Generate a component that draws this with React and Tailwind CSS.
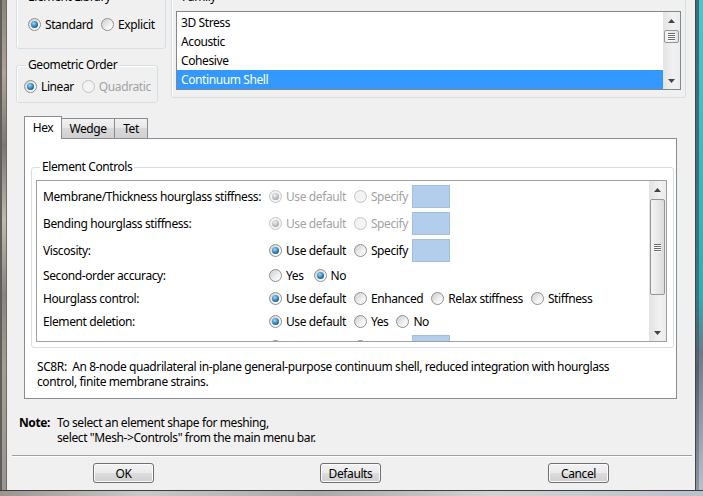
import React from "react";

const dim = "text-[#a3a3a3]";

function Radio({ checked = false, disabled = false, label, className = "" }) {
  return (
    <span className={`flex items-center ${className}`}>
      <span
        className={`flex items-center justify-center w-[13px] h-[13px] rounded-full border ${
          disabled
            ? "border-[#c4c4c4] bg-[#f3f3f3]"
            : "border-[#8e8f8f] bg-[linear-gradient(135deg,#cdcdcd,#f4f4f4_65%,#ffffff)]"
        }`}
      >
        {checked && (
          <span
            className={`w-[7px] h-[7px] rounded-full ${
              disabled
                ? "bg-[radial-gradient(circle_at_40%_35%,#f2f2f2,#a6a6a6_75%)]"
                : "bg-[radial-gradient(circle_at_40%_35%,#9bdcfb,#2b78b1_55%,#163f66)]"
            }`}
          />
        )}
      </span>
      {label && <span className={`ml-[4px] whitespace-nowrap ${disabled ? dim : "text-black"}`}>{label}</span>}
    </span>
  );
}

function Box() {
  return <span className="-ml-[4px] w-[38px] h-[23px] bg-[#b3cdec] border border-[#a4bedd]" />;
}

function Arrow({ down }) {
  return (
    <svg width="7" height="4" viewBox="0 0 7 4">
      <path d={down ? "M0 0H7L3.5 4z" : "M3.5 0L7 4H0z"} fill="#444" />
    </svg>
  );
}

function Grip() {
  return (
    <div className="flex flex-col gap-[1px]">
      {[0, 1, 2, 3].map((i) => (
        <div key={i} className="w-[7px] h-[1px] bg-[#6b6b6b] shadow-[0_1px_0_#fff]" />
      ))}
    </div>
  );
}

function ScrollBar({ thumb }) {
  return (
    <div className="flex flex-col w-[17px] shrink-0 bg-[linear-gradient(to_right,#e3e3e3,#f1f1f1_60%,#ececec)]">
      <div className="h-[17px] flex items-center justify-center">
        <Arrow />
      </div>
      <div className="flex-1 flex flex-col items-center">{thumb}</div>
      <div className="h-[17px] flex items-center justify-center">
        <Arrow down />
      </div>
    </div>
  );
}

function Row({ label, tall, children }) {
  return (
    <div className={`flex items-center ${tall ? "h-[27px]" : "h-[23px]"}`}>
      <span className="w-[226px] shrink-0 whitespace-nowrap">{label}</span>
      <div className="flex items-center gap-[8px]">{children}</div>
    </div>
  );
}

function Button({ children, className = "" }) {
  return (
    <div
      className={`w-[61px] h-[20px] rounded-[3px] border border-[#707070] bg-[linear-gradient(#f2f2f2,#ebebeb_50%,#dddddd_50%,#cfcfcf)] shadow-[inset_0_0_0_1px_#fbfbfb] flex items-center justify-center ${className}`}
    >
      {children}
    </div>
  );
}

export default function App() {
  return (
    <div className="w-[703px] h-[496px] overflow-hidden flex flex-col bg-[#f0f0f0] font-['Noto_Sans','Liberation_Sans',sans-serif] text-[12px] leading-[15px] tracking-[-0.4px] text-black">
      <div className="flex h-[490px]">
        {/* left window frame */}
        <div className="flex shrink-0">
          <div className="w-[2px] bg-[#5e5e5e]" />
          <div className="w-[4px] bg-[linear-gradient(to_bottom,#8c8479,#b0a496_15%,#7d7872_30%,#c2b8ac_45%,#8a847c_60%,#a79d92_75%,#9d968e)]" />
          <div className="w-[1px] bg-[#6a6a6a]" />
        </div>

        {/* dialog body */}
        <div className="w-[688px] flex flex-col overflow-hidden">
          <div className="flex items-start mt-[-11px]">
            <div className="ml-[9px] flex flex-col w-[150px]">
              <fieldset className="h-[60px] border border-[#d5dfe5] rounded-[3px] px-[4px] shadow-[inset_1px_1px_0_#fff]">
                <legend className="ml-[5px] px-[2px] leading-[16px]">Element Library</legend>
                <div className="flex items-center h-[19px] mt-[10px] ml-[7px]">
                  <Radio checked label="Standard" />
                  <Radio label="Explicit" className="ml-[8px]" />
                </div>
              </fieldset>
              <fieldset className="mt-[8px] w-[142px] h-[46px] border border-[#d5dfe5] rounded-[3px] px-[4px] shadow-[inset_1px_1px_0_#fff]">
                <legend className="ml-[5px] px-[2px] leading-[16px]">Geometric Order</legend>
                <div className="flex items-center h-[19px] mt-[4px] ml-[3px]">
                  <Radio checked label="Linear" />
                  <Radio disabled label="Quadratic" className="ml-[8px]" />
                </div>
              </fieldset>
            </div>

            <fieldset className="ml-[5px] w-[515px] h-[109px] border border-[#d5dfe5] rounded-[3px] px-[4px] shadow-[inset_1px_1px_0_#fff]">
              <legend className="ml-[4px] px-[2px] leading-[16px]">Family</legend>
              <div className="mt-[6px] h-[79px] border border-[#828790] bg-white flex">
                <div className="flex-1 flex flex-col pt-[1px]">
                  {["3D Stress", "Acoustic", "Cohesive"].map((t) => (
                    <div key={t} className="h-[19px] flex items-center pl-[4px]">
                      {t}
                    </div>
                  ))}
                  <div className="h-[19px] flex items-center pl-[4px] bg-[#3399ff] text-white">Continuum Shell</div>
                </div>
                <ScrollBar
                  thumb={
                    <div className="mt-[1px] w-[15px] h-[13px] rounded-[2px] border border-[#959595] bg-[linear-gradient(to_right,#f4f4f4,#e4e4e4)] flex items-center justify-center">
                      <Grip />
                    </div>
                  }
                />
              </div>
            </fieldset>
          </div>

          {/* tabs */}
          <div className="mt-[13px] ml-[17px] flex items-end h-[22px]">
            <div className="relative z-10 mb-[-1px] h-[23px] w-[38px] border border-b-0 border-[#898c95] bg-white flex items-center justify-center pb-[1px]">
              Hex
            </div>
            <div className="h-[20px] w-[53px] border border-l-0 border-b-0 border-[#898c95] bg-[linear-gradient(#f2f2f2,#e6e6e6_50%,#d9d9d9_50%,#d0d0d0)] flex items-center justify-center">
              Wedge
            </div>
            <div className="h-[20px] w-[33px] border border-l-0 border-b-0 border-[#898c95] bg-[linear-gradient(#f2f2f2,#e6e6e6_50%,#d9d9d9_50%,#d0d0d0)] flex items-center justify-center">
              Tet
            </div>
          </div>

          <div className="ml-[17px] w-[653px] h-[261px] border border-[#898c95] bg-white flex flex-col">
            <fieldset className="mt-[20px] ml-[6px] w-[643px] h-[189px] border border-[#d5dfe5] rounded-[3px] px-[4px]">
              <legend className="ml-[4px] px-[2px] leading-[16px]">Element Controls</legend>
              <div className="mt-[5px] w-[631px] h-[162px] border border-[#a0a0a0] flex">
                <div className="flex-1 overflow-hidden pt-[2px] pl-[6px]">
                  <Row tall label="Membrane/Thickness hourglass stiffness:">
                    <Radio checked disabled label="Use default" />
                    <Radio disabled label="Specify" />
                    <Box />
                  </Row>
                  <Row tall label="Bending hourglass stiffness:">
                    <Radio checked disabled label="Use default" />
                    <Radio disabled label="Specify" />
                    <Box />
                  </Row>
                  <Row tall label="Viscosity:">
                    <Radio checked label="Use default" />
                    <Radio label="Specify" />
                    <Box />
                  </Row>
                  <Row label="Second-order accuracy:">
                    <Radio label="Yes" />
                    <Radio checked label="No" className="ml-[2px]" />
                  </Row>
                  <Row label="Hourglass control:">
                    <Radio checked label="Use default" />
                    <Radio label="Enhanced" />
                    <Radio label="Relax stiffness" />
                    <Radio label="Stiffness" />
                  </Row>
                  <Row label="Element deletion:">
                    <Radio checked label="Use default" />
                    <Radio label="Yes" />
                    <Radio label="No" />
                  </Row>
                  <Row tall label="Max degradation:">
                    <Radio checked label="Use default" />
                    <Radio label="Specify" />
                    <Box />
                  </Row>
                </div>
                <ScrollBar
                  thumb={
                    <div className="mt-[1px] w-[15px] h-[96px] rounded-[2px] border border-[#959595] bg-[linear-gradient(to_right,#f4f4f4,#e6e6e6_60%,#dcdcdc)] flex items-center justify-center">
                      <Grip />
                    </div>
                  }
                />
              </div>
            </fieldset>
            <div className="mt-[11px] ml-[12px] whitespace-pre">
              <div>SC8R:  An 8-node quadrilateral in-plane general-purpose continuum shell, reduced integration with hourglass</div>
              <div>control, finite membrane strains.</div>
            </div>
          </div>

          {/* note */}
          <div className="mt-[16px] ml-[12px] flex">
            <span className="w-[38px] shrink-0 font-bold">Note:</span>
            <div>
              <div>To select an element shape for meshing,</div>
              <div>select "Mesh-&gt;Controls" from the main menu bar.</div>
            </div>
          </div>

          <div className="mt-[10px] ml-[5px] w-[680px] h-[2px] border-t border-b border-t-[#a0a0a0] border-b-white" />

          <div className="mt-[6px] flex">
            <Button className="ml-[86px]">OK</Button>
            <Button className="ml-[166px]">Defaults</Button>
            <Button className="ml-[167px]">Cancel</Button>
          </div>
        </div>

        {/* right window frame */}
        <div className="flex shrink-0">
          <div className="w-[1px] bg-[#454545]" />
          <div className="w-[3px] bg-[linear-gradient(to_bottom,#3f6b78,#3c7480_60%,#56606c_75%,#8d98a4)]" />
          <div className="w-[4px] bg-[linear-gradient(to_bottom,#48c8cc,#2bb0b4_60%,#6c7a88_72%,#b7c0ca)]" />
        </div>
      </div>

      {/* bottom window frame */}
      <div className="h-[6px] border-t border-[#3d3d3d] bg-[linear-gradient(to_right,#9b958e,#c9c9c9_20%,#a9a9a9_45%,#d2d2d2_70%,#b9c1ca)]" />
    </div>
  );
}
